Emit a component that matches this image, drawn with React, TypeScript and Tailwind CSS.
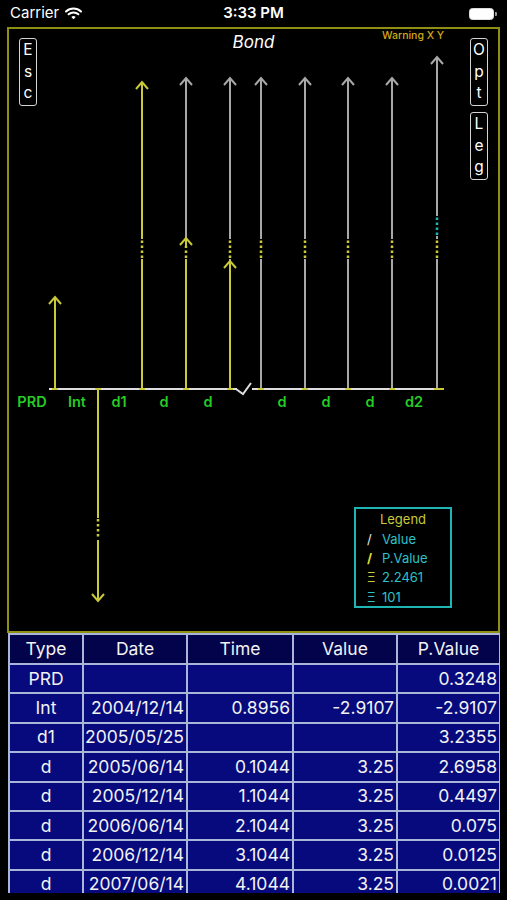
import React from "react";

const Y = "#c9c93a";
const G = "#a8a8a8";
const C = "#1fb5b5";

function ArrowUp({ x, tip, color }: { x: number; tip: number; color: string }) {
  return (
    <path
      d={`M${x - 6} ${tip + 7} L${x} ${tip} L${x + 6} ${tip + 7}`}
      stroke={color}
      strokeWidth={2}
      fill="none"
    />
  );
}

function VLine({ x, y1, y2, color }: { x: number; y1: number; y2: number; color: string }) {
  return <line x1={x} y1={y1} x2={x} y2={y2} stroke={color} strokeWidth={2} />;
}

function Dots({ x, y1, y2, color }: { x: number; y1: number; y2: number; color: string }) {
  return (
    <line x1={x} y1={y1} x2={x} y2={y2} stroke={color} strokeWidth={2.5} strokeDasharray="2.5 2.5" />
  );
}

function Chart() {
  const grayXs = [261, 305, 348, 392];
  const labels: [string, number][] = [
    ["PRD", 32],
    ["Int", 77],
    ["d1", 119],
    ["d", 164],
    ["d", 208],
    ["d", 282],
    ["d", 326],
    ["d", 370],
    ["d2", 414],
  ];
  const junctions = [55, 98, 142, 186, 230, 261, 305, 348, 392, 437];
  return (
    <svg
      className="absolute left-0 top-0"
      width={489}
      height={602}
      viewBox="9 29 489 602"
    >
      {/* 1: PRD yellow */}
      <VLine x={55} y1={389} y2={297} color={Y} />
      <ArrowUp x={55} tip={297} color={Y} />

      {/* 2: Int downward yellow */}
      <VLine x={98} y1={389} y2={518} color={Y} />
      <Dots x={98} y1={519} y2={539} color={Y} />
      <VLine x={98} y1={540} y2={601} color={Y} />
      <path d="M92 594 L98 601 L104 594" stroke={Y} strokeWidth={2} fill="none" />

      {/* 3: d1 yellow */}
      <VLine x={142} y1={389} y2={259} color={Y} />
      <Dots x={142} y1={258} y2={240} color={Y} />
      <VLine x={142} y1={239} y2={82} color={Y} />
      <ArrowUp x={142} tip={82} color={Y} />

      {/* 4: gray + yellow */}
      <VLine x={186} y1={238} y2={78} color={G} />
      <ArrowUp x={186} tip={78} color={G} />
      <VLine x={186} y1={389} y2={259} color={Y} />
      <Dots x={186} y1={258} y2={246} color={Y} />
      <VLine x={186} y1={246} y2={239} color={Y} />
      <ArrowUp x={186} tip={238} color={Y} />

      {/* 5: gray + yellow */}
      <VLine x={230} y1={262} y2={259} color={G} />
      <Dots x={230} y1={258} y2={240} color={Y} />
      <VLine x={230} y1={239} y2={78} color={G} />
      <ArrowUp x={230} tip={78} color={G} />
      <VLine x={230} y1={389} y2={262} color={Y} />
      <ArrowUp x={230} tip={261} color={Y} />

      {/* gray lines */}
      {grayXs.map((x) => (
        <g key={x}>
          <VLine x={x} y1={389} y2={259} color={G} />
          <Dots x={x} y1={258} y2={240} color={Y} />
          <VLine x={x} y1={239} y2={78} color={G} />
          <ArrowUp x={x} tip={78} color={G} />
        </g>
      ))}

      {/* last tall gray */}
      <VLine x={437} y1={389} y2={259} color={G} />
      <Dots x={437} y1={258} y2={240} color={Y} />
      <VLine x={437} y1={239} y2={236} color={G} />
      <Dots x={437} y1={235} y2={217} color={C} />
      <VLine x={437} y1={216} y2={57} color={G} />
      <ArrowUp x={437} tip={57} color={G} />

      {/* axis */}
      <line x1={49} y1={389} x2={237} y2={389} stroke="#dedede" strokeWidth={2} />
      <path d="M236 389 L243 394 L251 383" stroke="#dedede" strokeWidth={2} fill="none" />
      <line x1={252} y1={389} x2={443} y2={389} stroke="#dedede" strokeWidth={2} />
      {junctions.map((x) => (
        <rect key={x} x={x - 3} y={388} width={6} height={2} fill={Y} />
      ))}
      <rect x={439} y={388} width={5} height={2} fill={Y} />

      {labels.map(([t, x], i) => (
        <text
          key={i}
          x={x}
          y={407}
          textAnchor="middle"
          fill="#25cc25"
          fontSize={14.5}
          fontWeight={600}
          fontFamily="Inter, 'Liberation Sans', sans-serif"
        >
          {t}
        </text>
      ))}
    </svg>
  );
}

function VButton({ letters }: { letters: string[] }) {
  return (
    <div className="flex h-[68px] w-[18px] flex-col items-center rounded-[3px] border-[1.5px] border-[#d4d4d4] text-[15.5px] leading-[21.5px] text-white">
      {letters.map((l, i) => (
        <span key={i}>{l}</span>
      ))}
    </div>
  );
}

function Legend() {
  return (
    <div className="absolute left-[345px] top-[478px] flex h-[101px] w-[98px] flex-col border-2 border-[#1fb5b5] text-[13px] leading-[20px]">
      <div className="flex h-[20px] items-center justify-center text-[#c9c93a]">Legend</div>
      <div className="h-[2px] bg-[#7a7a7a]" />
      <div className="flex h-[19px] items-center pl-[11px]">
        <span className="w-[15px] text-[#e8e8e8]">/</span>
        <span className="text-[#2ec1c8]">Value</span>
      </div>
      <div className="flex h-[19px] items-center pl-[11px]">
        <span className="w-[15px] font-bold text-[#dede30]">/</span>
        <span className="text-[#2ec1c8]">P.Value</span>
      </div>
      <div className="h-[2px] bg-[#7a7a7a]" />
      <div className="flex h-[20px] items-center pl-[11px]">
        <span className="w-[15px] text-[#c9c93a]">Ξ</span>
        <span className="text-[#2ec1c8]">2.2461</span>
      </div>
      <div className="flex h-[19px] items-center pl-[11px]">
        <span className="w-[15px] text-[#2ec1c8]">Ξ</span>
        <span className="text-[#2ec1c8]">101</span>
      </div>
    </div>
  );
}

function StatusBar() {
  return (
    <div className="relative flex h-[27px] items-center px-[10px] text-[15px] text-white">
      <div className="flex items-center gap-[6px]">
        <span>Carrier</span>
        <svg width="17" height="13" viewBox="0 0 17 13">
          <path d="M1 4.5 A11 11 0 0 1 16 4.5" stroke="white" strokeWidth="2" fill="none" strokeLinecap="round" />
          <path d="M3.6 7.3 A7.2 7.2 0 0 1 13.4 7.3" stroke="white" strokeWidth="2" fill="none" strokeLinecap="round" />
          <path d="M6.3 10 L8.5 12.2 L10.7 10 A3.2 3.2 0 0 0 6.3 10 Z" fill="white" />
        </svg>
      </div>
      <div className="absolute left-0 right-0 text-center font-semibold">3:33 PM</div>
      <div className="ml-auto flex items-center">
        <div className="h-[12px] w-[25px] rounded-[3.5px] border border-[#ddd] bg-white" />
        <div className="ml-[1px] h-[4px] w-[2px] rounded-r-[1px] bg-[#999]" />
      </div>
    </div>
  );
}

const rows: [string, string, string, string, string][] = [
  ["PRD", "", "", "", "0.3248"],
  ["Int", "2004/12/14", "0.8956", "-2.9107", "-2.9107"],
  ["d1", "2005/05/25", "", "", "3.2355"],
  ["d", "2005/06/14", "0.1044", "3.25", "2.6958"],
  ["d", "2005/12/14", "1.1044", "3.25", "0.4497"],
  ["d", "2006/06/14", "2.1044", "3.25", "0.075"],
  ["d", "2006/12/14", "3.1044", "3.25", "0.0125"],
  ["d", "2007/06/14", "4.1044", "3.25", "0.0021"],
];

function DataTable() {
  const widths = ["w-[74px]", "w-[104px]", "w-[106px]", "w-[104px]", "w-[103px]"];
  const headers = ["Type", "Date", "Time", "Value", "P.Value"];
  return (
    <div className="ml-[8px] h-[260px] w-[492px] overflow-hidden">
      <table className="w-[492px] table-fixed border-collapse text-[17.5px] text-[#f2f2f2]">
        <thead>
          <tr className="h-[30px] bg-[#03034c]">
            {headers.map((h, i) => (
              <th key={h} className={`${widths[i]} border-2 border-[#a9b6d8] p-0 text-center font-normal`}>
                {h}
              </th>
            ))}
          </tr>
        </thead>
        <tbody>
          {rows.map((r, ri) => (
            <tr key={ri} className="h-[29.4px] bg-[#070a7c]">
              {r.map((c, ci) => (
                <td
                  key={ci}
                  className={`border-2 border-[#a9b6d8] p-0 ${ci === 0 ? "text-center" : "pr-[2px] text-right"}`}
                >
                  {c}
                </td>
              ))}
            </tr>
          ))}
        </tbody>
      </table>
    </div>
  );
}

export default function App() {
  return (
    <div className="flex h-[900px] w-[507px] flex-col overflow-hidden bg-black font-['Inter','Liberation_Sans',sans-serif]">
      <StatusBar />
      <div className="relative ml-[7px] h-[606px] w-[493px] shrink-0 border-2 border-[#8f8f14]">
        <Chart />
        <div className="absolute left-0 right-0 top-[2px] text-center text-[17px] italic leading-[22px] text-white">
          Bond
        </div>
        <div className="absolute left-[373px] top-[0px] text-[10.5px] font-medium leading-[13px] text-[#d2a816]">
          Warning X Y
        </div>
        <div className="absolute left-[10px] top-[9px]">
          <VButton letters={["E", "s", "c"]} />
        </div>
        <div className="absolute left-[461px] top-[9px] flex flex-col gap-[6px]">
          <VButton letters={["O", "p", "t"]} />
          <VButton letters={["L", "e", "g"]} />
        </div>
        <Legend />
      </div>
      <DataTable />
    </div>
  );
}
